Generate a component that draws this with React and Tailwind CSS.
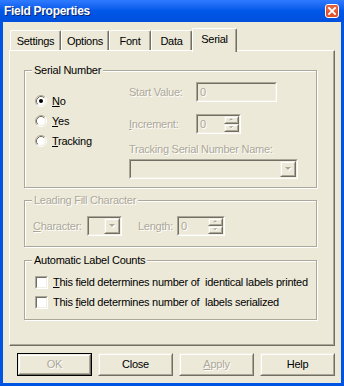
import React from "react";

const dis = "text-[#ACA899] [text-shadow:1px_1px_0_#ffffff]";

function Sunken({ className = "", children }) {
  return (
    <div className={"border border-t-[#ACA899] border-l-[#ACA899] border-b-white border-r-white " + className}>
      <div className="w-full h-full border border-t-[#716F64] border-l-[#716F64] border-b-[#F1EFE2] border-r-[#F1EFE2] bg-[#ECE9D8] flex items-center">
        {children}
      </div>
    </div>
  );
}

function Raised({ className = "", children }) {
  return (
    <div className={"border border-t-[#F1EFE2] border-l-[#F1EFE2] border-b-[#716F64] border-r-[#716F64] " + className}>
      <div className="w-full h-full border border-t-white border-l-white border-b-[#ACA899] border-r-[#ACA899] bg-[#ECE9D8] flex items-center justify-center">
        {children}
      </div>
    </div>
  );
}

function Arrow({ up = false, size = 7 }) {
  return (
    <svg width={size} height={Math.ceil(size / 2) + 1} viewBox="0 0 7 5">
      {up ? (
        <>
          <polygon points="4,1 7,4 1,4" fill="#ffffff" />
          <polygon points="3,0 6,3 0,3" fill="#ACA899" />
        </>
      ) : (
        <>
          <polygon points="1,1 7,1 4,4" fill="#ffffff" />
          <polygon points="0,0 6,0 3,3" fill="#ACA899" />
        </>
      )}
    </svg>
  );
}

function Radio({ checked }) {
  return (
    <svg width="12" height="12" viewBox="0 0 12 12" className="shrink-0">
      <circle cx="6" cy="6" r="4.5" fill="#ffffff" />
      <path d="M 2.11 9.89 A 5.5 5.5 0 0 1 9.89 2.11" stroke="#ACA899" fill="none" strokeWidth="1" />
      <path d="M 9.89 2.11 A 5.5 5.5 0 0 1 2.11 9.89" stroke="#ffffff" fill="none" strokeWidth="1" />
      <path d="M 2.82 9.18 A 4.5 4.5 0 0 1 9.18 2.82" stroke="#716F64" fill="none" strokeWidth="1" />
      <path d="M 9.18 2.82 A 4.5 4.5 0 0 1 2.82 9.18" stroke="#F1EFE2" fill="none" strokeWidth="1" />
      {checked && <circle cx="6" cy="6" r="2" fill="#000000" />}
    </svg>
  );
}

function Check() {
  return (
    <div className="w-[13px] h-[13px] shrink-0 border border-t-[#ACA899] border-l-[#ACA899] border-b-white border-r-white">
      <div className="w-full h-full border border-t-[#716F64] border-l-[#716F64] border-b-[#F1EFE2] border-r-[#F1EFE2] bg-white" />
    </div>
  );
}

function Group({ label, disabled, className = "", children }) {
  return (
    <div className={"relative border border-[#ACA899] [box-shadow:inset_1px_1px_0_#ffffff,1px_1px_0_#ffffff] " + className}>
      <span className={"absolute left-[7px] -top-[7px] px-[2px] bg-[#ECE9D8] leading-[13px] " + (disabled ? dis : "text-black")}>
        {label}
      </span>
      {children}
    </div>
  );
}

function Tab({ label, w, selected }) {
  if (selected) {
    return (
      <div
        className={"relative z-10 -mb-[2px] h-[24px] bg-[#ECE9D8] border-l border-t border-l-white border-t-white border-r border-r-[#716F64] rounded-t-[2px] [box-shadow:inset_-1px_0_0_#ACA899] flex justify-center pt-[4px] text-black " + w}
      >
        {label}
      </div>
    );
  }
  return (
    <div
      className={"h-[20px] bg-[#ECE9D8] border-l border-t border-l-white border-t-white border-r border-r-[#716F64] rounded-t-[2px] [box-shadow:inset_-1px_0_0_#ACA899] flex justify-center pt-[4px] text-black " + w}
    >
      {label}
    </div>
  );
}

function Btn({ label, disabled, def }) {
  const inner = (
    <Raised className="w-full h-full">
      <span className={disabled ? dis : "text-black"}>{label}</span>
    </Raised>
  );
  return (
    <div className={"w-[75px] h-[23px] " + (def ? "border border-black" : "")}>{inner}</div>
  );
}

export default function App() {
  return (
    <div className="w-[344px] h-[386px] flex flex-col bg-[#0054E3] font-['Liberation_Sans',Arial,sans-serif] text-[11px] leading-[13px] tracking-[-0.25px] select-none">
      {/* Title bar */}
      <div className="h-[22px] shrink-0 flex items-center justify-between pl-[4px] pr-[5px] bg-gradient-to-b from-[#2F7BFF] via-[#0057E8] to-[#0050DC]">
        <span className="text-white font-bold text-[12px] leading-[15px] tracking-[-0.3px] [text-shadow:1px_1px_0_#0A246A]">
          Field Properties
        </span>
        <svg width="14" height="14" viewBox="0 0 14 14">
          <rect x="0.5" y="0.5" width="13" height="13" rx="2.5" fill="#E0512B" stroke="#ffffff" strokeWidth="1" />
          <rect x="1.5" y="1.5" width="11" height="6" rx="1.5" fill="#EA7650" opacity="0.5" />
          <path d="M4 4 L10 10 M10 4 L4 10" stroke="#ffffff" strokeWidth="1.8" strokeLinecap="square" />
        </svg>
      </div>

      {/* Body */}
      <div className="flex-1 mx-[3px] mb-[3px] bg-[#ECE9D8] flex flex-col pt-[6px] pl-[6px] pr-[6px]">
        {/* Tabs */}
        <div className="h-[22px] flex items-end pl-[1px]">
          <Tab label="Settings" w="w-[51px]" />
          <Tab label="Options" w="w-[48px]" />
          <Tab label="Font" w="w-[42px]" />
          <Tab label="Data" w="w-[41px]" />
          <Tab label="Serial" w="w-[45px]" selected />
        </div>

        {/* Panel */}
        <div className="w-[326px] h-[296px] border border-t-white border-l-white border-r-[#716F64] border-b-[#716F64] [box-shadow:inset_-1px_-1px_0_#ACA899] pl-[14px] pt-[19px] flex flex-col">
          {/* Serial Number */}
          <Group label="Serial Number" className="w-[293px] h-[118px] flex">
            <div className="w-[104px] pl-[10px] pt-[20px] flex flex-col">
              <div className="h-[20px] flex items-center gap-[5px]">
                <Radio checked />
                <span><span className="underline underline-offset-[1px]">N</span>o</span>
              </div>
              <div className="h-[20px] flex items-center gap-[5px]">
                <Radio />
                <span><span className="underline underline-offset-[1px]">Y</span>es</span>
              </div>
              <div className="h-[20px] flex items-center gap-[5px]">
                <Radio />
                <span><span className="underline underline-offset-[1px]">T</span>racking</span>
              </div>
            </div>
            <div className="flex flex-col pt-[11px]">
              <div className="h-[20px] flex items-center">
                <span className={"w-[67px] " + dis}>Start Value:</span>
                <Sunken className="w-[81px] h-[20px]">
                  <span className={"pl-[2px] " + dis}>0</span>
                </Sunken>
              </div>
              <div className="h-[20px] mt-[12px] flex items-center">
                <span className={"w-[67px] " + dis}>
                  <span className="underline underline-offset-[1px]">I</span>ncrement:
                </span>
                <Sunken className="w-[45px] h-[20px]">
                  <span className={"flex-1 pl-[2px] " + dis}>0</span>
                  <div className="w-[15px] h-full flex flex-col">
                    <Raised className="w-full h-1/2"><Arrow up size={5} /></Raised>
                    <Raised className="w-full h-1/2"><Arrow size={5} /></Raised>
                  </div>
                </Sunken>
              </div>
              <span className={"mt-[9px] " + dis}>Tracking Serial Number Name:</span>
              <Sunken className="mt-[3px] w-[169px] h-[20px]">
                <div className="flex-1" />
                <Raised className="w-[16px] h-full"><Arrow /></Raised>
              </Sunken>
            </div>
          </Group>

          {/* Leading Fill Character */}
          <Group label="Leading Fill Character" disabled className="mt-[12px] w-[293px] h-[47px] pl-[8px] pt-[15px]">
            <div className="h-[20px] flex items-center">
              <span className={"w-[54px] " + dis}>
                <span className="underline underline-offset-[1px]">C</span>haracter:
              </span>
              <Sunken className="w-[35px] h-[20px]">
                <div className="flex-1" />
                <Raised className="w-[16px] h-full"><Arrow /></Raised>
              </Sunken>
              <span className={"ml-[16px] w-[39px] " + dis}>Length:</span>
              <Sunken className="w-[48px] h-[20px]">
                <span className={"flex-1 pl-[2px] " + dis}>0</span>
                <div className="w-[15px] h-full flex flex-col">
                  <Raised className="w-full h-1/2"><Arrow up size={5} /></Raised>
                  <Raised className="w-full h-1/2"><Arrow size={5} /></Raised>
                </div>
              </Sunken>
            </div>
          </Group>

          {/* Automatic Label Counts */}
          <Group label="Automatic Label Counts" className="mt-[13px] w-[293px] h-[60px] pl-[10px] pt-[11px] flex flex-col">
            <div className="h-[20px] flex items-center gap-[5px]">
              <Check />
              <span className="whitespace-pre">
                <span className="underline underline-offset-[1px]">T</span>his field determines number of  identical labels printed
              </span>
            </div>
            <div className="h-[20px] flex items-center gap-[5px]">
              <Check />
              <span className="whitespace-pre">
                This <span className="underline underline-offset-[1px]">f</span>ield determines number of  labels serialized
              </span>
            </div>
          </Group>
        </div>

        {/* Buttons */}
        <div className="mt-[7px] pl-[8px] flex gap-[6px]">
          <Btn label="OK" disabled def />
          <Btn label="Close" />
          <Btn label={<><span className="underline underline-offset-[1px]">A</span>pply</>} disabled />
          <Btn label="Help" />
        </div>
      </div>
    </div>
  );
}
